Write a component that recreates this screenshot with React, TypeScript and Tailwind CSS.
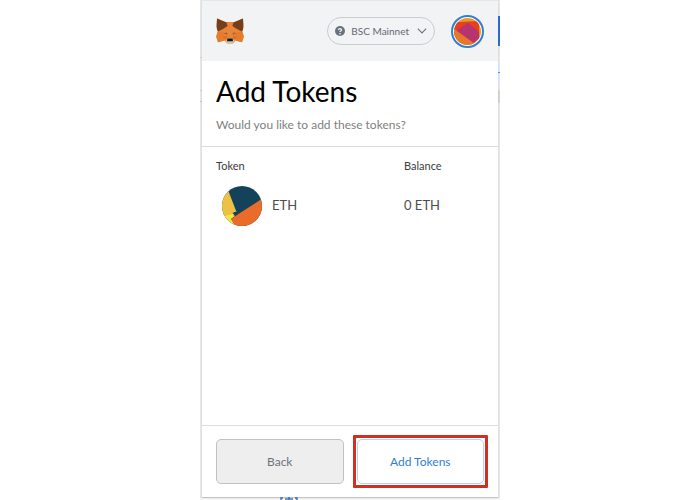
import type { ReactNode } from 'react';

interface Token {
  symbol: string;
  balance: string;
}

const tokens: Token[] = [{ symbol: 'ETH', balance: '0 ETH' }];

function FoxLogo() {
  return (
    <svg viewBox="0 0 28 26" className="h-[26px] w-7" role="img" aria-label="MetaMask">
      <path d="M1 0.5L9.5 4H18.5L27 0.5L27.4 10L26.2 13.5L27.8 18.5L26 24.2L19.5 22.6L17 25.6H11L8.5 22.6L2 24.2L0.2 18.5L1.8 13.5L0.6 10Z" fill="#e8853a" />
      <path d="M1.8 13.5L8 14L8.5 22.6L2 24.2L0.2 18.5Z" fill="#e57c2d" />
      <path d="M26.2 13.5L20 14L19.5 22.6L26 24.2L27.8 18.5Z" fill="#e57c2d" />
      <path d="M1 0.5L10.5 4.6L11.6 8L7 11L2 13.6L1.2 12L0.6 8Z" fill="#763e1a" />
      <path d="M27 0.5L17.5 4.6L16.4 8L21 11L26 13.6L26.8 12L27.4 8Z" fill="#763e1a" />
      <path d="M7.5 15.6L10.5 14.2L12 17Z" fill="#b0602c" />
      <path d="M20.5 15.6L17.5 14.2L16 17Z" fill="#b0602c" />
      <path d="M6.5 18.5L11 17.8L10.5 22Z" fill="#d97029" />
      <path d="M21.5 18.5L17 17.8L17.5 22Z" fill="#d97029" />
      <path d="M9.5 22.2L12 20.6H16L18.5 22.2L17 25.8H11Z" fill="#cfc4ba" />
      <path d="M11.4 20.6H16.6L17 23.2H11Z" fill="#161616" />
    </svg>
  );
}

function AccountIcon() {
  return (
    <svg viewBox="0 0 28 28" className="size-[27px] rounded-full">
      <rect width="28" height="28" fill="#ea9a2c" />
      <path d="M0 4.5L26 3V20L8 24L0 18Z" fill="#e8401d" />
      <path d="M0 11L24 28H0Z" fill="#e6772b" />
      <path d="M14.5 5L26 14.500V21L20.500 26L2.500 13Z" fill="#b8346f" />
    </svg>
  );
}

function TokenIcon() {
  return (
    <svg viewBox="0 0 40 40" className="size-10 shrink-0">
      <clipPath id="token-circle">
        <circle cx="20" cy="20" r="20" />
      </clipPath>
      <g clipPath="url(#token-circle)">
        <rect width="40" height="40" fill="#15425b" />
        <path d="M0 0H4.500L14.500 26L10.500 28L13 29.500L0 32Z" fill="#ecc144" />
        <path d="M0 30.500L8.500 28.500L13 27L11 29.500L13 30L9 33L12.500 38V40H0Z" fill="#f4e544" />
        <path d="M40 12.800L14 29.500L9.500 33L12.500 40H40Z" fill="#ea6c28" />
        <path d="M10.500 27L14 25.500L16 28L13.500 29.800Z" fill="#15425b" />
      </g>
    </svg>
  );
}

function NetworkButton() {
  return (
    <button type="button" className="flex h-7 items-center rounded-full border border-[#c9ccd0] px-[7px] text-[10px] text-[#5f6973]">
      <svg viewBox="0 0 10 10" className="mr-[6px] size-[10px]">
        <circle cx="5" cy="5" r="5" fill="#6a737d" />
        <path d="M3.500 4C3.500 2.200 6.500 2.200 6.500 4C6.500 5 5 5 5 6" fill="none" stroke="#f2f3f4" strokeWidth="1.300" />
        <circle cx="5" cy="7.700" r="0.800" fill="#f2f3f4" />
      </svg>
      BSC Mainnet
      <svg viewBox="0 0 10 6" className="ml-2 h-[6px] w-[10px]" fill="none" stroke="#6a737d" strokeWidth="1.100">
        <path d="M0.800 0.700L5 5L9.200 0.700" />
      </svg>
    </button>
  );
}

function Header() {
  return (
    <header className="flex h-15 shrink-0 items-center justify-between bg-[#f2f3f4] px-[14px]">
      <FoxLogo />
      <div className="flex items-center gap-4">
        <NetworkButton />
        <button type="button" aria-label="Account" className="flex size-[33px] items-center justify-center rounded-full border-2 border-[#2f80d0] bg-white">
          <AccountIcon />
        </button>
      </div>
    </header>
  );
}

function TokenTable() {
  return (
    <table className="w-full table-fixed text-left">
      <thead>
        <tr className="text-[11px] leading-4 text-[#3c3c3c]">
          <th className="w-[188px] font-normal">Token</th>
          <th className="font-normal">Balance</th>
        </tr>
      </thead>
      <tbody>
        {tokens.map((token) => (
          <tr key={token.symbol} className="text-[13px] text-[#4d4d4d]">
            <td className="pl-[6px] pt-3">
              <div className="flex items-center gap-[10px]">
                <TokenIcon />
                {token.symbol}
              </div>
            </td>
            <td className="pt-3">{token.balance}</td>
          </tr>
        ))}
      </tbody>
    </table>
  );
}

function Highlight({ children }: { children: ReactNode }) {
  return (
    <div className="relative grid">
      {children}
      <div className="pointer-events-none absolute -inset-1 rounded-[1px] border-[3px] border-[#d0301f]" />
    </div>
  );
}

// Slivers of the page that show around the popup
function PageBehind() {
  return (
    <div aria-hidden="true" className="absolute inset-0 bg-[#e6e6e6]">
      <div className="absolute right-0 top-4 h-[30px] w-[2px] bg-[#2b6cd4]" />
      <div className="absolute right-0 top-[62px] h-[22px] w-[2px] bg-[#dbe8fa]" />
      <div className="absolute right-0 top-[72px] h-px w-[2px] bg-[#5b93e0]" />
      <div className="absolute right-0 top-[90px] h-[13px] w-[2px] bg-[#d4d4d4]" />
      <div className="absolute left-0 top-[57px] h-px w-[2px] bg-[#d0d0d0]" />
      <div className="absolute left-0 top-[90px] h-px w-[2px] bg-[#d0d0d0]" />
      <div className="absolute left-0 top-[101px] h-px w-[2px] bg-[#c4c4c4]" />
      <div className="absolute bottom-0 left-0 h-[2px] w-full bg-[#f4f4f4]" />
      <svg viewBox="0 0 18 3" className="absolute bottom-0 left-[80px] h-[3px] w-[18px]" fill="none" stroke="#3b78d8" strokeWidth="1.500">
        <path d="M3 1H1V3M15 1H17V3M5 2H13M9 0V3" />
      </svg>
    </div>
  );
}

export default function App() {
  return (
    <div className="flex h-screen min-h-[400px] justify-center bg-white font-['Lato',sans-serif]">
      <div className="relative flex w-full max-w-[300px] flex-col px-[2px] pb-[3px] pt-px">
        <PageBehind />
        <main className="relative flex flex-1 flex-col bg-white shadow-[0_1px_1px_rgba(0,0,0,0.15)]">
          <Header />
          <section className="border-b border-[#d6dbdf] px-[14px] py-[13px]">
            <h1 className="text-[28px] leading-[34px] text-black">Add Tokens</h1>
            <p className="mt-2 text-xs leading-[17px] text-[#808080]">Would you like to add these tokens?</p>
          </section>
          <section className="flex-1 px-[14px] pt-[11px]">
            <TokenTable />
          </section>
          <footer className="grid grid-cols-2 gap-[13px] border-t border-[#dcdfe1] px-[14px] py-[13px] text-xs">
            <button type="button" className="h-[45px] rounded-[5px] border border-[#bfc1c3] bg-[#eeeeee] text-[#6a737d]">
              Back
            </button>
            <Highlight>
              <button type="button" className="h-[45px] rounded-[5px] border border-[#b8d3ee] bg-white text-[#2f80d0]">
                Add Tokens
              </button>
            </Highlight>
          </footer>
        </main>
      </div>
    </div>
  );
}
